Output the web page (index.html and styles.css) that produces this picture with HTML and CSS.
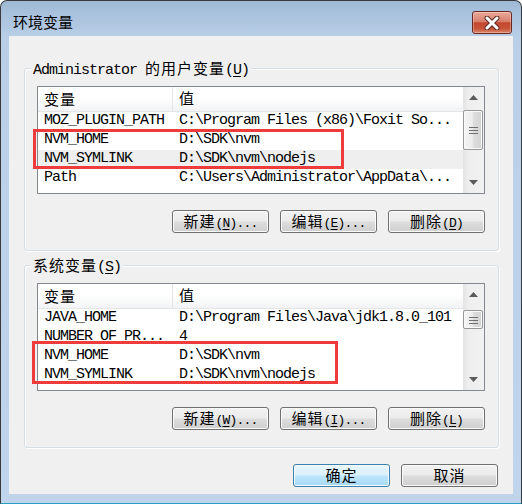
FILE: index.html
```html
<!DOCTYPE html>
<html lang="zh-CN">
<head>
    <meta charset="UTF-8">
    <title>环境变量</title>
    <link rel="stylesheet" href="styles.css">
</head>
<body>
    <div class="window">
        <div class="titlebar">
            <span class="title">环境变量</span>
            <div class="close">
                <svg width="18" height="14" viewBox="0 0 18 14">
                    <path d="M4 2 L14 12 M14 2 L4 12" stroke="#5a2a24" stroke-width="5" stroke-linecap="round"/>
                    <path d="M4 2 L14 12 M14 2 L4 12" stroke="#fff" stroke-width="3" stroke-linecap="round"/>
                </svg>
            </div>
        </div>

        <div class="client">
            <!-- user variables -->
            <div class="group">
                <div class="legend">Administrator <span class="cjk">的用户变量</span>(<u>U</u>)</div>
                <div class="listview">
                    <div class="lv-main">
                        <div class="lv-head">
                            <div class="name"><span class="cjk">变量</span></div>
                            <div class="value"><span class="cjk">值</span></div>
                        </div>
                        <div class="row"><div class="name">MOZ_PLUGIN_PATH</div><div class="value">C:\Program Files (x86)\Foxit So...</div></div>
                        <div class="row"><div class="name">NVM_HOME</div><div class="value">D:\SDK\nvm</div></div>
                        <div class="row hot"><div class="name">NVM_SYMLINK</div><div class="value">D:\SDK\nvm\nodejs</div></div>
                        <div class="row"><div class="name">Path</div><div class="value">C:\Users\Administrator\AppData\...</div></div>
                    </div>
                    <div class="scroll">
                        <div class="arrow"><svg width="9" height="5"><polygon points="0,5 4.5,0 9,5" fill="#5b5b5b"/></svg></div>
                        <div class="track">
                            <div class="thumb thumb-user"><svg width="9" height="8"><path d="M0 1.5h9M0 4.5h9M0 7.5h9" stroke="#6e6e6e"/></svg></div>
                        </div>
                        <div class="arrow"><svg width="9" height="5"><polygon points="0,0 4.5,5 9,0" fill="#5b5b5b"/></svg></div>
                    </div>
                </div>
                <div class="btns">
                    <button class="btn"><span class="cjk">新建</span>(<u>N</u>)...</button>
                    <button class="btn"><span class="cjk">编辑</span>(<u>E</u>)...</button>
                    <button class="btn"><span class="cjk">删除</span>(<u>D</u>)</button>
                </div>
            </div>

            <!-- system variables -->
            <div class="group">
                <div class="legend"><span class="cjk">系统变量</span>(<u>S</u>)</div>
                <div class="listview">
                    <div class="lv-main">
                        <div class="lv-head">
                            <div class="name"><span class="cjk">变量</span></div>
                            <div class="value"><span class="cjk">值</span></div>
                        </div>
                        <div class="row"><div class="name">JAVA_HOME</div><div class="value">D:\Program Files\Java\jdk1.8.0_101</div></div>
                        <div class="row"><div class="name">NUMBER_OF_PR...</div><div class="value">4</div></div>
                        <div class="row"><div class="name">NVM_HOME</div><div class="value">D:\SDK\nvm</div></div>
                        <div class="row"><div class="name">NVM_SYMLINK</div><div class="value">D:\SDK\nvm\nodejs</div></div>
                    </div>
                    <div class="scroll">
                        <div class="arrow"><svg width="9" height="5"><polygon points="0,5 4.5,0 9,5" fill="#5b5b5b"/></svg></div>
                        <div class="track">
                            <div class="thumb thumb-sys"><svg width="9" height="8"><path d="M0 1.5h9M0 4.5h9M0 7.5h9" stroke="#6e6e6e"/></svg></div>
                        </div>
                        <div class="arrow"><svg width="9" height="5"><polygon points="0,0 4.5,5 9,0" fill="#5b5b5b"/></svg></div>
                    </div>
                </div>
                <div class="btns">
                    <button class="btn"><span class="cjk">新建</span>(<u>W</u>)...</button>
                    <button class="btn"><span class="cjk">编辑</span>(<u>I</u>)...</button>
                    <button class="btn"><span class="cjk">删除</span>(<u>L</u>)</button>
                </div>
            </div>

            <div class="dlg-btns">
                <button class="btn btn-default"><span class="cjk">确定</span></button>
                <button class="btn"><span class="cjk">取消</span></button>
            </div>
        </div>

        <!-- red annotation boxes -->
        <div class="mark mark-user"></div>
        <div class="mark mark-sys"></div>
    </div>
</body>
</html>
```

FILE: styles.css
```css
* {
    box-sizing: border-box;
}
body {
    margin: 0;
    background: #fff;
    font-family: "Liberation Mono", monospace;
    font-size: 15px;
    letter-spacing: -1px;
    color: #000;
}
.cjk {
    font-family: "Noto Sans CJK SC", sans-serif;
    font-size: 15px;
    letter-spacing: 1px;
}
u {
    text-underline-offset: 2px;
}
.window {
    position: relative;
    width: 522px;
    height: 504px;
    border: 1px solid #3a3a3a;
    border-bottom-color: #2a9fc4;
    border-radius: 7px 7px 0 0;
    background: linear-gradient(#9fb9d6, #b9cfe8 36px, #c0d5ec);
    padding: 0 8px 9px;
    display: flex;
    flex-direction: column;
}
.titlebar {
    height: 35px;
    display: flex;
    justify-content: space-between;
    align-items: flex-start;
}
.title {
    font-family: "Noto Sans CJK SC", sans-serif;
    font-size: 15px;
    letter-spacing: 0;
    line-height: 20px;
    padding: 11px 0 0 4px;
}
.close {
    margin: 10px 1px 0 0;
    width: 40px;
    height: 23px;
    border: 1px solid #6b2620;
    border-radius: 3px;
    background: linear-gradient(#eaa99b, #d97f6c 45%, #c4482f 52%, #c85438 80%, #dc876c);
    box-shadow: inset 0 0 0 1px rgba(255, 255, 255, 0.3);
    display: flex;
    align-items: center;
    justify-content: center;
}
.client {
    flex: 1;
    background: #f0f0f0;
    padding-top: 32px;
}
.group {
    margin: 0 14px 0 15px;
    border: 1px solid #d5dfe5;
    border-radius: 3px;
    box-shadow: inset 1px 1px 0 #fff, 1px 1px 0 #fff;
    padding: 0 13px 17px 12px;
}
.group + .group {
    margin-top: 14px;
}
.legend {
    display: table;
    margin: -9px 0 0 -6px;
    padding: 0 2px;
    height: 16px;
    line-height: 16px;
    white-space: nowrap;
    background: #f0f0f0;
}
.listview {
    margin-top: 7px;
    height: 108px;
    border: 1px solid #828790;
    background: #fff;
    display: flex;
}
.lv-main {
    flex: 1;
    overflow: hidden;
}
.lv-head {
    height: 25px;
    display: flex;
    align-items: center;
    border-bottom: 1px solid #e5e5e5;
    background: linear-gradient(#fff 45%, #f2f3f5);
}
.lv-head .name {
    border-right: 1px solid #e5e5e5;
    height: 24px;
    line-height: 23px;
}
.lv-head .value {
    line-height: 23px;
}
.row {
    height: 19px;
    line-height: 18px;
    display: flex;
    white-space: nowrap;
}
.row.hot {
    background: #efefef;
}
.name {
    width: 135px;
    flex: none;
    padding-left: 6px;
}
.value {
    flex: 1;
    padding-left: 6px;
}
.scroll {
    width: 21px;
    flex: none;
    display: flex;
    flex-direction: column;
    background: linear-gradient(90deg, #e3e3e3, #eeeeee 25%, #f1f1f1);
}
.arrow {
    height: 21px;
    display: flex;
    align-items: center;
    justify-content: center;
}
.track {
    flex: 1;
}
.thumb {
    margin: 2px 1px 0 0;
    border: 1px solid #979797;
    border-radius: 2px;
    background: linear-gradient(90deg, #f5f5f5, #ececec 45%, #dcdcdc 55%, #d3d3d3);
    box-shadow: inset 0 0 0 1px #fafafa;
    display: flex;
    align-items: center;
    justify-content: center;
}
.thumb-user {
    height: 40px;
}
.thumb-sys {
    height: 19px;
    margin-top: 5px;
}
.btns,
.dlg-btns {
    display: flex;
    justify-content: flex-end;
    gap: 11px;
}
.btns {
    margin-top: 16px;
}
.dlg-btns {
    margin: 16px 15px 0 0;
}
.btn {
    width: 97px;
    height: 23px;
    padding: 0;
    border: 1px solid #707070;
    border-radius: 3px;
    background: linear-gradient(#f2f2f2, #ebebeb 48%, #dddddd 52%, #cfcfcf);
    box-shadow: inset 0 0 0 1px #fbfbfb;
    font-family: "Liberation Mono", monospace;
    font-size: 13px;
    letter-spacing: -0.8px;
    line-height: 20px;
    color: #000;
}
.btn-default {
    border-color: #3c7fb1;
    background: linear-gradient(#eaf6fd, #d9f0fc 48%, #bee6fd 52%, #a7d9f5);
    box-shadow: inset 0 0 0 1px #f4fbff;
}
.mark {
    position: absolute;
    border: 3px solid #ee3b3b;
}
.mark-user {
    left: 32px;
    top: 128px;
    width: 311px;
    height: 40px;
}
.mark-sys {
    left: 31px;
    top: 340px;
    width: 306px;
    height: 43px;
}
```
